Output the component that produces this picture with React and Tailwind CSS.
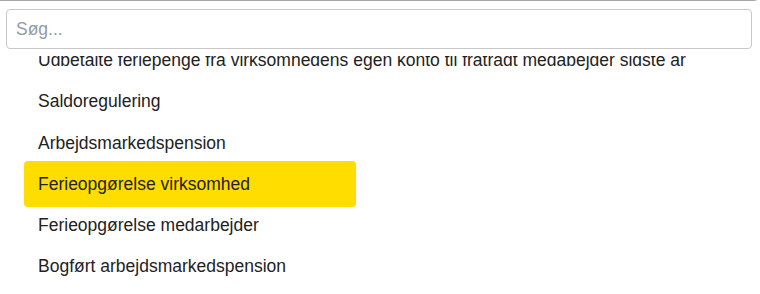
import { useState } from 'react';

const items = [
  'Udbetalte feriepenge fra virksomhedens egen konto til fratrådt medabejder sidste år',
  'Saldoregulering',
  'Arbejdsmarkedspension',
  'Ferieopgørelse virksomhed',
  'Ferieopgørelse medarbejder',
  'Bogført arbejdsmarkedspension',
];

export default function App() {
  const [active, setActive] = useState(3);
  const [query, setQuery] = useState('');

  return (
    <div className="w-[760px] h-[294px] bg-white overflow-hidden font-['Liberation_Sans',Arial,sans-serif]">
      <div className="h-full border-t border-[#a8a8a8] rounded-tr-[6px] flex flex-col">
        <div className="relative z-10 bg-white pt-[8px] pl-[6px] pr-[8px] pb-[7px]">
          <input
            value={query}
            onChange={(e) => setQuery(e.target.value)}
            placeholder="Søg..."
            className="w-full h-[40px] rounded-[4px] border border-[#c9c9c9] px-[9px] text-[17.5px] text-[#222] placeholder:text-[#929ba6] outline-none"
          />
        </div>
        <ul className="flex-1 overflow-hidden">
          {items.map((label, i) => (
            <li
              key={label}
              onMouseEnter={() => setActive(i)}
              className={`${i === 0 ? '-mt-[16.5px]' : ''} ${
                i === active
                  ? 'h-[46px] -my-[2.5px] bg-[#ffdd00] rounded-[4px] w-[332px]'
                  : 'h-[41.25px]'
              } ml-[24px] pl-[14px] flex items-center text-[17.5px] text-[#222] whitespace-nowrap cursor-pointer`}
            >
              {label}
            </li>
          ))}
        </ul>
      </div>
    </div>
  );
}
